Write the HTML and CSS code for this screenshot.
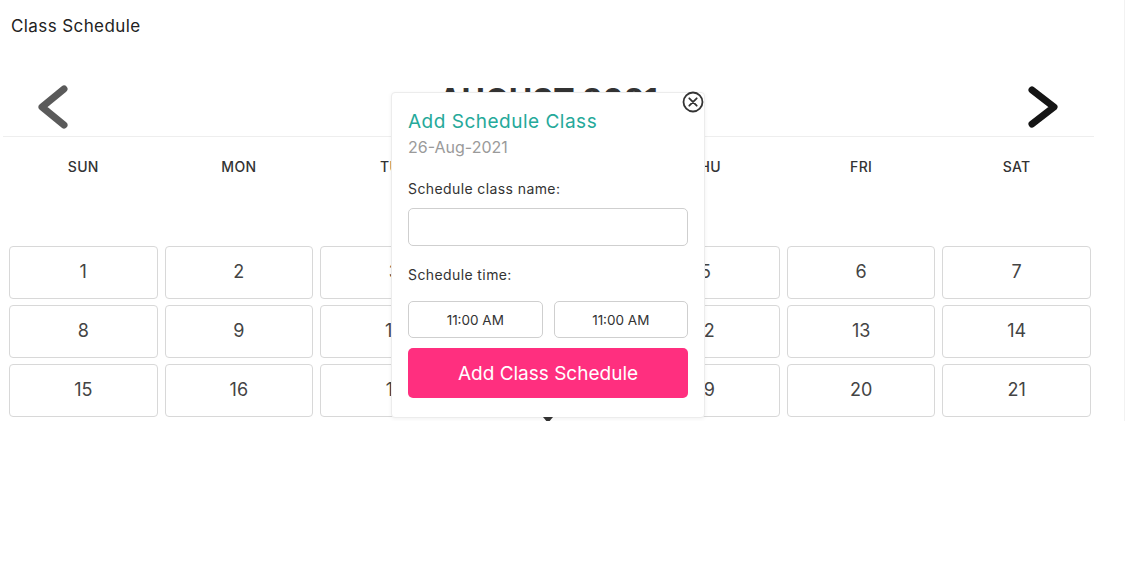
FILE: index.html
```html
<!DOCTYPE html>
<html>
<head>
<meta charset="utf-8">
<link rel="stylesheet" href="styles.css">
</head>
<body>
<div class="page">
  <div class="main">
    <h1 class="page-title">Class Schedule</h1>
    <div class="cal-head">
      <button class="nav prev" aria-label="Previous">
        <svg width="34" height="44" viewBox="0 0 34 44"><polyline points="28,4 6,22 28,40" fill="none" stroke="#5a5a5a" stroke-width="7" stroke-linecap="round" stroke-linejoin="round"/></svg>
      </button>
      <div class="month">AUGUST 2021</div>
      <button class="nav next" aria-label="Next">
        <svg width="34" height="44" viewBox="0 0 34 44"><polyline points="6,5 28,22 6,39" fill="none" stroke="#151515" stroke-width="7" stroke-linecap="round" stroke-linejoin="round"/></svg>
      </button>
    </div>
    <div class="weekdays">
      <div>SUN</div><div>MON</div><div>TUE</div><div>WED</div><div>THU</div><div>FRI</div><div>SAT</div>
    </div>
    <div class="days">
      <div class="day">1</div><div class="day">2</div><div class="day">3</div><div class="day">4</div><div class="day">5</div><div class="day">6</div><div class="day">7</div>
      <div class="day">8</div><div class="day">9</div><div class="day">10</div><div class="day">11</div><div class="day">12</div><div class="day">13</div><div class="day">14</div>
      <div class="day">15</div><div class="day">16</div><div class="day">17</div><div class="day">18</div><div class="day">19</div><div class="day">20</div><div class="day">21</div>
    </div>

    <div class="popup">
      <button class="close" aria-label="Close">
        <svg width="22" height="22" viewBox="0 0 22 22"><circle cx="11" cy="11" r="9.5" fill="#fff" stroke="#333" stroke-width="1.8"/><path d="M7.3 7.3 L14.7 14.7 M14.7 7.3 L7.3 14.7" stroke="#333" stroke-width="1.8" stroke-linecap="round"/></svg>
      </button>
      <div class="pop-title">Add Schedule Class</div>
      <div class="pop-date">26-Aug-2021</div>
      <label class="pop-label">Schedule class name:</label>
      <div class="input"></div>
      <label class="pop-label time-label">Schedule time:</label>
      <div class="times">
        <div class="time">11:00 AM</div>
        <div class="time">11:00 AM</div>
      </div>
      <button class="add-btn">Add Class Schedule</button>
      <span class="pop-arrow"></span>
    </div>
  </div>
</div>
</body>
</html>
```

FILE: styles.css
```css
* { box-sizing: border-box; }
html, body { margin: 0; padding: 0; background: #fff; }
body {
  font-family: "Inter", "Open Sans", "Liberation Sans", sans-serif;
  color: #333;
}
.page { display: flex; }
.main {
  position: relative;
  width: 1125px;
  height: 421px;
  border-right: 1px solid #f2f2f2;
}
.page-title {
  margin: 0;
  padding: 15px 0 0 11px;
  font-size: 17px;
  font-weight: 400;
  color: #222;
  line-height: 22px;
  letter-spacing: 0.4px;
}
.cal-head {
  margin: 42px 30px 0 3px;
  height: 58px;
  border-bottom: 1px solid #eee;
  display: flex;
  align-items: flex-start;
  justify-content: space-between;
  padding: 6px 34px 0 33px;
}
.nav {
  background: none;
  border: 0;
  padding: 0;
  width: 34px;
  height: 44px;
  display: block;
  flex: none;
}
.nav svg { display: block; }
.month {
  font-size: 32px;
  font-weight: 700;
  color: #333;
  letter-spacing: 0;
  line-height: 40px;
  margin-top: -4px;
}
.weekdays {
  margin-left: 9px;
  width: 1082px;
  display: grid;
  grid-template-columns: repeat(7, 1fr);
  column-gap: 7px;
  padding-top: 21px;
  height: 109px;
  font-size: 14px;
  font-weight: 500;
  color: #333;
  text-align: center;
  line-height: 18px;
  letter-spacing: 0.3px;
}
.days {
  margin-left: 9px;
  width: 1082px;
  display: grid;
  grid-template-columns: repeat(7, 1fr);
  grid-auto-rows: 53px;
  gap: 6px 7px;
}
.day {
  border: 1px solid #d8d8d8;
  border-radius: 4px;
  display: flex;
  align-items: center;
  justify-content: center;
  font-size: 18px;
  color: #444;
  padding-bottom: 2px;
}
.popup {
  position: absolute;
  left: 391px;
  top: 92px;
  width: 314px;
  height: 326px;
  background: #fff;
  border: 1px solid #ececec;
  border-radius: 4px;
  box-shadow: 0 1px 4px rgba(0,0,0,0.06);
  padding: 16px 16px 0 16px;
  display: flex;
  flex-direction: column;
}
.close {
  position: absolute;
  top: -2px;
  right: 0px;
  background: none;
  border: 0;
  padding: 0;
  width: 22px;
  height: 22px;
}
.close svg { display: block; }
.pop-title {
  font-size: 19px;
  color: #25a99a;
  line-height: 26px;
  letter-spacing: 0.5px;
}
.pop-date {
  font-size: 16px;
  color: #9a9a9a;
  line-height: 22px;
  margin-top: 1px;
}
.pop-label {
  font-size: 14px;
  color: #333;
  line-height: 18px;
  margin-top: 22px;
  letter-spacing: 0.4px;
}
.input {
  margin-top: 10px;
  height: 38px;
  border: 1px solid #cfcfcf;
  border-radius: 5px;
}
.time-label { margin-top: 20px; }
.times {
  margin-top: 17px;
  display: grid;
  grid-template-columns: 1fr 1fr;
  gap: 11px;
}
.time {
  height: 37px;
  border: 1px solid #cfcfcf;
  border-radius: 5px;
  display: flex;
  align-items: center;
  justify-content: center;
  font-size: 13.5px;
  color: #333;
}
.add-btn {
  margin-top: 10px;
  height: 50px;
  border: 0;
  border-radius: 5px;
  background: #ff2f7f;
  color: #fff;
  font-family: inherit;
  font-size: 19px;
}
.pop-arrow {
  position: absolute;
  left: 151px;
  bottom: -6px;
  width: 0;
  height: 0;
  border-left: 5px solid transparent;
  border-right: 5px solid transparent;
  border-top: 6px solid #333;
}
```
